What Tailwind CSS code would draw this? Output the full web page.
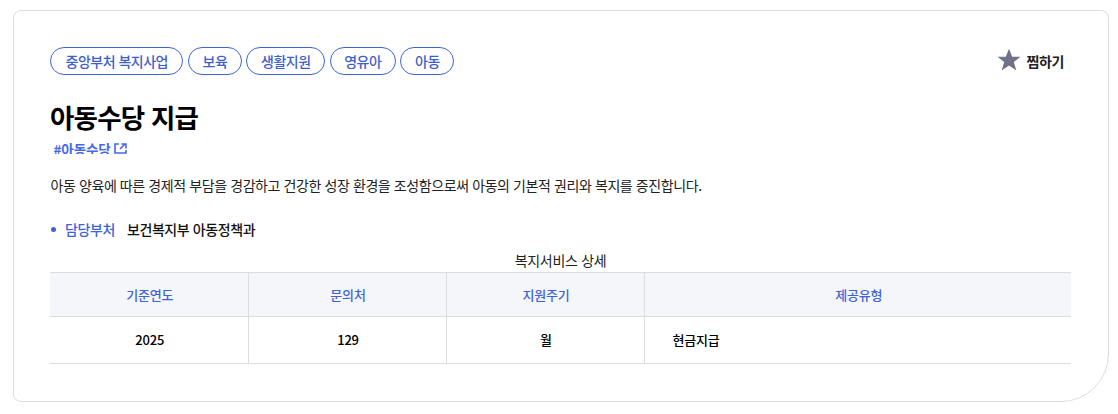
<!DOCTYPE html>
<html lang="ko">
<head>
    <meta charset="UTF-8">
    <title>아동수당 지급</title>
    <script src="https://cdn.jsdelivr.net/npm/@tailwindcss/browser@4"></script>
</head>
<body class="bg-white font-['Noto_Sans_CJK_KR','Noto_Sans',sans-serif] text-[#111]">
    <div class="w-[1118px] h-[414px] pt-[10px] pl-[13px] overflow-hidden">
        <!-- Card -->
        <div class="w-[1096px] h-[392px] border border-[#dddddd] rounded-tl-lg rounded-tr-lg rounded-bl-lg rounded-br-[48px] pt-[36px] pl-[36px] pr-[36px]">
            <!-- Tags + bookmark -->
            <div class="flex items-center justify-between h-[28px]">
                <div class="flex gap-[4.500px]">
                    <span class="h-[28px] px-[14.500px] flex items-center border border-[#3e64d8] rounded-full text-[14px] font-medium tracking-[-0.5px] text-[#3e5fc9]">중앙부처 복지사업</span>
                    <span class="h-[28px] px-[13.600px] flex items-center border border-[#3e64d8] rounded-full text-[14px] font-medium tracking-[-0.5px] text-[#3e5fc9]">보육</span>
                    <span class="h-[28px] px-[13.600px] flex items-center border border-[#3e64d8] rounded-full text-[14px] font-medium tracking-[-0.5px] text-[#3e5fc9]">생활지원</span>
                    <span class="h-[28px] px-[13.600px] flex items-center border border-[#3e64d8] rounded-full text-[14px] font-medium tracking-[-0.5px] text-[#3e5fc9]">영유아</span>
                    <span class="h-[28px] px-[13.600px] flex items-center border border-[#3e64d8] rounded-full text-[14px] font-medium tracking-[-0.5px] text-[#3e5fc9]">아동</span>
                </div>
                <div class="flex items-center gap-[6px] mr-[8px]">
                    <svg class="-mt-[2px]" width="24" height="24" viewBox="0 0 24 24"><path fill="#6e7187" d="M12 .8l3.2 8h8.300l-6.700 5.200 2.500 8.600L12 17.600l-7.300 5 2.500-8.600L.5 8.800h8.300z"/></svg>
                    <span class="text-[14px] font-bold tracking-[-0.4px] text-[#222]">찜하기</span>
                </div>
            </div>

            <h1 class="mt-[22px] text-[26.5px] leading-[40px] font-bold tracking-[-0.8px] text-black">아동수당 지급</h1>

            <!-- Hashtag link, cut off at the bottom as in the source -->
            <div class="mt-[5px] ml-[3.500px] h-[12px] overflow-hidden flex items-start gap-[3px]">
                <span class="text-[13.500px] leading-[17px] -mt-[1px] font-bold tracking-[-0.1px] text-[#4668e6]">#아동수당</span>
                <svg class="mt-[1px]" width="13" height="11" viewBox="0 0 13 11" fill="none" stroke="#4668e6" stroke-width="1.600"><path d="M5 1H1v9h11V7M6 6l5-5M7.500 1H12v4.500"/></svg>
            </div>

            <p class="mt-[21px] ml-[0.5px] text-[14px] leading-[20px] tracking-[-0.41px] text-[#222]">아동 양육에 따른 경제적 부담을 경감하고 건강한 성장 환경을 조성함으로써 아동의 기본적 권리와 복지를 증진합니다.</p>

            <!-- Department -->
            <div class="mt-[24px] flex items-center h-[20px] text-[14px] font-medium tracking-[-0.4px]">
                <span class="w-[5px] h-[5px] rounded-full bg-[#3e64d8] ml-[1px] mr-[9px]"></span>
                <span class="text-[#3e64d8] mr-[12px]">담당부처</span>
                <span class="text-[#111]">보건복지부 아동정책과</span>
            </div>

            <!-- Service table -->
            <table class="mt-[11px] w-[1021px] table-fixed border-collapse text-[13px] tracking-[-0.2px]">
                <caption class="h-[22px] text-[14px] leading-[20px] tracking-[-0.3px] text-[#222]">복지서비스 상세</caption>
                <colgroup>
                    <col class="w-[198px]"><col class="w-[198px]"><col class="w-[198px]"><col>
                </colgroup>
                <thead>
                    <tr class="h-[44px] bg-[#f5f6fa] border-y border-[#dddddd] text-[#3e64d8]">
                        <th class="font-medium pl-[2px]">기준연도</th>
                        <th class="font-medium pl-[2px] border-l border-[#dddddd]">문의처</th>
                        <th class="font-medium pl-[2px] border-l border-[#dddddd]">지원주기</th>
                        <th class="font-medium pl-[2px] border-l border-[#dddddd]">제공유형</th>
                    </tr>
                </thead>
                <tbody>
                    <tr class="h-[47px] border-b border-[#dddddd] font-medium text-black">
                        <td class="text-center pl-[2px]">2025</td>
                        <td class="text-center pl-[2px] border-l border-[#dddddd]">129</td>
                        <td class="text-center pl-[2px] border-l border-[#dddddd]">월</td>
                        <td class="pl-[28px] border-l border-[#dddddd]">현금지급</td>
                    </tr>
                </tbody>
            </table>
        </div>
    </div>
</body>
</html>
